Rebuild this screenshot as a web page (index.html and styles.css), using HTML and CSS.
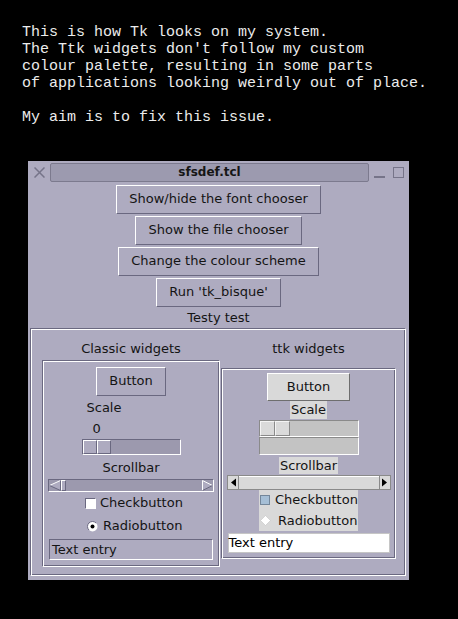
FILE: index.html
```html
<!DOCTYPE html>
<html>
<head>
<meta charset="utf-8">
<title>sfsdef.tcl</title>
<link rel="stylesheet" href="styles.css">
</head>
<body>
<pre class="intro">This is how Tk looks on my system.
The Ttk widgets don't follow my custom
colour palette, resulting in some parts
of applications looking weirdly out of place.

My aim is to fix this issue.</pre>
<div class="window">
  <div class="titlebar">
    <svg class="wm-close" width="11" height="11" viewBox="0 0 11 11"><path d="M0.5 0.5 L10.5 10.5 M10.5 0.5 L0.5 10.5" stroke="#767489" stroke-width="1.5" fill="none"/></svg>
    <div class="title">sfsdef.tcl</div>
    <svg class="wm-min" width="11" height="11" viewBox="0 0 11 11"><path d="M0 10 H11" stroke="#767489" stroke-width="2"/></svg>
    <svg class="wm-max" width="11" height="11" viewBox="0 0 11 11"><rect x="0.5" y="0.5" width="10" height="10" stroke="#767489" fill="none"/></svg>
  </div>
  <div class="tk-btn first">Show/hide the font chooser</div>
  <div class="tk-btn">Show the file chooser</div>
  <div class="tk-btn">Change the colour scheme</div>
  <div class="tk-btn">Run 'tk_bisque'</div>
  <div class="testy">Testy test</div>
  <div class="outer groove">
    <div class="col-label">Classic widgets</div>
    <div class="col-label">ttk widgets</div>

    <div class="classic groove">
      <div class="tk-btn c-button">Button</div>
      <div class="c-scale">
        <div class="c-scale-label">Scale</div>
        <div class="c-scale-value">0</div>
        <div class="c-trough"><div class="c-slider"><span class="c-half"></span><span class="c-half"></span></div></div>
      </div>
      <div class="c-scroll-label">Scrollbar</div>
      <div class="c-scroll">
        <svg class="c-arrow" width="12" height="11" viewBox="0 0 12 11">
          <polygon points="0.5,5.5 11.5,0.5 11.5,10.5" fill="#aeabc0"/>
          <path d="M0.5 5.5 L11.5 0.5" stroke="#ffffff" fill="none"/>
          <path d="M0.5 5.5 L11.5 10.5 M11.5 0.5 V10.5" stroke="#6a6880" fill="none"/>
        </svg>
        <div class="c-thumb"></div>
        <div class="c-fill"></div>
        <svg class="c-arrow" width="11" height="11" viewBox="0 0 11 11">
          <polygon points="0.5,0.5 10.5,5.5 0.5,10.5" fill="#aeabc0"/>
          <path d="M0.5 10.5 V0.5 L10.5 5.5" stroke="#ffffff" fill="none"/>
          <path d="M10.5 5.5 L0.5 10.5" stroke="#6a6880" fill="none"/>
        </svg>
      </div>
      <div class="c-check"><span class="c-box"></span><span>Checkbutton</span></div>
      <div class="c-radio">
        <svg width="11" height="11" viewBox="0 0 11 11">
          <circle cx="5.5" cy="5.5" r="5" fill="#ffffff"/>
          <path d="M1.96 9.04 A5 5 0 0 1 9.04 1.96" stroke="#6a6880" fill="none"/>
          <circle cx="5.5" cy="5.5" r="2" fill="#000000"/>
        </svg>
        <span>Radiobutton</span>
      </div>
      <div class="c-entry">Text entry</div>
    </div>

    <div class="ttk groove">
      <div class="t-button">Button</div>
      <div class="t-label t-scale-label">Scale</div>
      <div class="t-scale"><span class="t-half"></span><span class="t-half"></span></div>
      <div class="t-scale t-blank"></div>
      <div class="t-label t-scroll-label">Scrollbar</div>
      <div class="t-scroll">
        <div class="t-arrow t-left">
          <svg width="10" height="13" viewBox="0 0 10 13"><polygon points="3,6.5 8,2.5 8,10.5" fill="#000"/></svg>
        </div>
        <div class="t-thumb"></div>
        <div class="t-arrow t-right">
          <svg width="10" height="13" viewBox="0 0 10 13"><polygon points="2,2.5 7,6.5 2,10.5" fill="#000"/></svg>
        </div>
      </div>
      <div class="t-check"><span class="t-box"></span><span>Checkbutton</span></div>
      <div class="t-radio">
        <svg width="11" height="11" viewBox="0 0 11 11"><polygon points="5.5,0.5 10.5,5.5 5.5,10.5 0.5,5.5" fill="#ffffff" stroke="#c4c4c4" stroke-width="0.6"/></svg>
        <span>Radiobutton</span>
      </div>
      <div class="t-entry">Text entry</div>
    </div>
  </div>
</div>
</body>
</html>
```

FILE: styles.css
```css
* { box-sizing: border-box; }

body {
  margin: 0;
  background: #000;
  width: 458px;
  height: 619px;
  overflow: hidden;
}

.intro {
  margin: 0;
  padding: 24px 0 0 22px;
  font-family: "Liberation Mono", monospace;
  font-size: 15px;
  line-height: 17px;
  color: #ececec;
}

.window {
  margin: 35px 0 0 28px;
  width: 381px;
  height: 419px;
  background: #aeabc0;
  display: flex;
  flex-direction: column;
  align-items: center;
  padding: 2px 0 4px;
  font-family: "DejaVu Sans", sans-serif;
  font-size: 13px;
  line-height: 16px;
  color: #141414;
}

.titlebar {
  align-self: stretch;
  display: flex;
  align-items: center;
  height: 19px;
}
.wm-close { margin-left: 6px; flex: none; }
.title {
  margin-left: 5px;
  width: 319px;
  height: 19px;
  border: 1px solid #7c7a8e;
  border-radius: 2px;
  background: #9c9aaf;
  font-weight: bold;
  font-size: 12px;
  line-height: 17px;
  text-align: center;
  color: #161616;
}
.wm-min { margin-left: 5px; flex: none; }
.wm-max { margin-left: 8px; flex: none; }

.tk-btn {
  border: 1px solid;
  border-color: #ffffff #6a6880 #6a6880 #ffffff;
  padding: 5px 12px 6px;
  white-space: nowrap;
  margin-top: 2px;
}
.tk-btn.first { margin-top: 3px; }

.testy { margin-top: 3px; }

.groove {
  border: 1px solid;
  border-color: #6a6880 #ffffff #ffffff #6a6880;
  box-shadow: inset 1px 1px 0 #ffffff, inset -1px -1px 0 #6a6880;
}

.outer {
  align-self: flex-start;
  margin: 2px 0 0 2px;
  width: 376px;
  display: grid;
  grid-template-columns: 178px 175px;
  column-gap: 1px;
  row-gap: 3px;
  padding: 12px 9px 8px 11px;
  align-items: center;
}
.col-label { text-align: center; }

/* classic column */
.classic {
  width: 178px;
  height: 207px;
  display: flex;
  flex-direction: column;
  align-items: center;
  padding: 6px 0;
}
.c-button { margin-top: 0; }

.c-scale { width: 99px; }
.c-scale-label { margin-top: 4px; padding-left: 5px; }
.c-scale-value { margin-top: 5px; padding-left: 11px; }
.c-trough {
  margin-top: 2px;
  height: 16px;
  border: 1px solid;
  border-color: #6a6880 #ffffff #ffffff #6a6880;
  background: #9c99ae;
  display: flex;
}
.c-slider { display: flex; }
.c-half {
  width: 14px;
  height: 14px;
  background: #aeabc0;
  border: 1px solid;
  border-color: #ffffff #6a6880 #6a6880 #ffffff;
}

.c-scroll-label { margin-top: 5px; }
.c-scroll {
  margin-top: 3px;
  width: 166px;
  height: 13px;
  border: 1px solid;
  border-color: #6a6880 #ffffff #ffffff #6a6880;
  background: #9c99ae;
  display: flex;
}
.c-arrow { flex: none; display: block; }
.c-thumb {
  width: 5px;
  background: #aeabc0;
  border: 1px solid;
  border-color: #ffffff #6a6880 #6a6880 #ffffff;
}
.c-fill { flex: 1; }

.c-check, .c-radio {
  align-self: stretch;
  display: flex;
  align-items: center;
  height: 20px;
}
.c-check { margin-top: 1px; padding-left: 42px; gap: 4px; }
.c-radio { margin-top: 3px; padding-left: 44px; gap: 5px; }
.c-radio svg { display: block; flex: none; }
.c-box {
  width: 11px;
  height: 11px;
  background: #ffffff;
  border: 1px solid;
  border-color: #6a6880 #ffffff #ffffff #6a6880;
}

.c-entry {
  margin-top: 3px;
  width: 164px;
  height: 21px;
  border: 1px solid;
  border-color: #6a6880 #ffffff #ffffff #6a6880;
  padding: 2px 2px 1px;
}

/* ttk column */
.ttk {
  width: 175px;
  height: 191px;
  display: flex;
  flex-direction: column;
  align-items: center;
  padding: 4px 0 5px;
}
.t-button {
  width: 83px;
  height: 28px;
  background: #d9d9d9;
  border: 1px solid;
  border-color: #ffffff #6e6e6e #6e6e6e #ffffff;
  padding: 5px 0;
  text-align: center;
}
.t-label { background: #d9d9d9; padding: 0 1px; }
.t-scale-label { line-height: 18px; }
.t-scroll-label { line-height: 17px; margin-top: 2px; }

.t-scale {
  width: 100px;
  height: 17px;
  margin-top: 1px;
  background: #c3c3c3;
  border: 1px solid;
  border-color: #8a8a8a #ffffff #ffffff #8a8a8a;
  display: flex;
}
.t-blank { height: 18px; margin-top: 0; }
.t-half {
  width: 15px;
  height: 15px;
  background: #dadada;
  border: 1px solid;
  border-color: #f4f4f4 #8a8a8a #8a8a8a #f4f4f4;
}

.t-scroll {
  margin-top: 1px;
  width: 164px;
  height: 15px;
  background: #d9d9d9;
  border: 1px solid #8a8a8a;
  display: flex;
}
.t-arrow { width: 11px; flex: none; }
.t-arrow svg { display: block; }
.t-left { border-right: 1px solid #8a8a8a; }
.t-right { border-left: 1px solid #8a8a8a; }
.t-thumb { flex: 1; box-shadow: inset 0 1px 0 #ffffff; }

.t-check, .t-radio {
  width: 99px;
  background: #d9d9d9;
  display: flex;
  align-items: center;
  padding-left: 1px;
}
.t-check { height: 20px; gap: 5px; }
.t-radio { height: 21px; gap: 7px; }
.t-radio svg { display: block; flex: none; }
.t-box {
  width: 10px;
  height: 10px;
  background: #a6bfd6;
  border: 1px solid #74879a;
}

.t-entry {
  margin-top: 2px;
  width: 162px;
  height: 20px;
  background: #ffffff;
  border: 1px solid #c6c6c6;
  padding: 1px 0;
  color: #000;
}
```
